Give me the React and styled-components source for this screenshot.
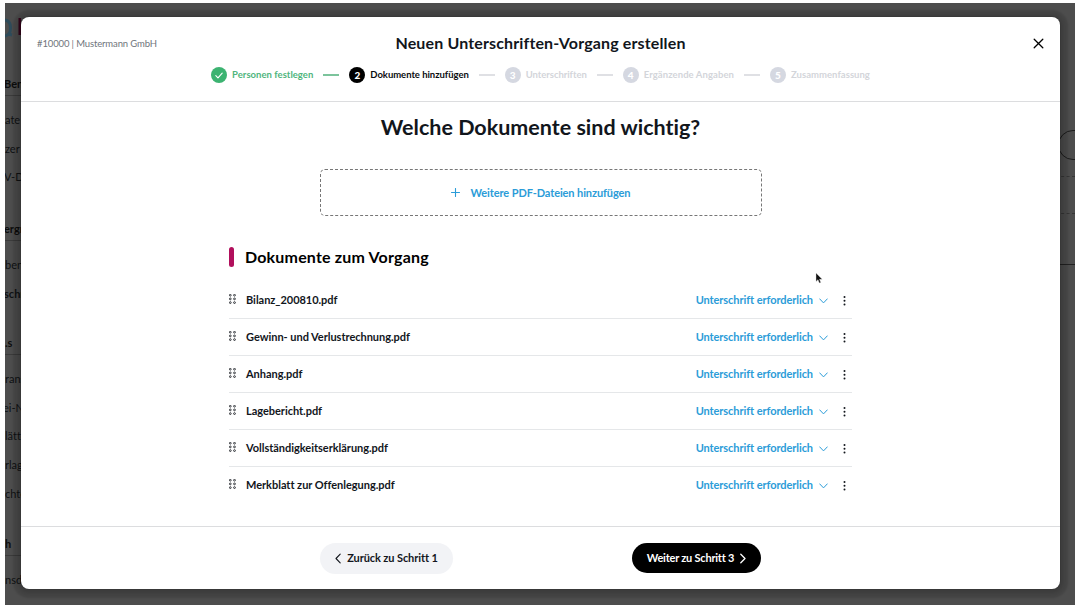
import React, { useState } from "react";

import styled, { createGlobalStyle } from "styled-components";

const GlobalStyle = createGlobalStyle`
  * {
    box-sizing: border-box;
  }

  body {
    margin: 0;
    background: #fff;
    font-family: Lato, "Noto Sans", sans-serif;
    font-variant-ligatures: none;
    color: #12161c;
  }

  button {
    font-family: inherit;
    padding: 0;
    border: 0;
    background: none;
  }
`;

const Screen = styled.div`
  position: relative;
  display: flex;
  justify-content: space-between;
  width: 1070px;
  height: 602px;
  margin: 3px 5px;
  overflow: hidden;
  background: #4d4d4d;
`;

const Sidebar = styled.nav`
  width: 70px;
  height: 100%;
  overflow: hidden;
`;

const LogoRow = styled.div`
  display: flex;
  align-items: flex-start;
  height: 68px;
  padding-top: 13px;
`;

const NavGroup = styled.div`
  height: ${props => props.height}px;
`;

const NavTitle = styled.div`
  height: 25px;
  margin-bottom: 9px;
  padding-top: 6px;
  border-bottom: 1px solid #3b3b3b;
  font-size: 11px;
  font-weight: 700;
  line-height: 14px;
  color: #0c0c0c;
  white-space: nowrap;
  text-indent: ${props => props.$shift || 0}px;
`;

const NavItem = styled.div`
  height: 28.7px;
  font-size: 11px;
  line-height: 30px;
  color: #0f1113;
  font-weight: ${props => (props.$bold ? 700 : 400)};
  white-space: nowrap;
  text-indent: ${props => props.$shift || 0}px;
`;

const PageEdge = styled.div`
  display: flex;
  flex-direction: column;
  width: 30px;
  height: 100%;
  padding-top: 127px;
`;

const RoundButton = styled.div`
  flex: none;
  width: 60px;
  height: 30px;
  border: 1px solid #1c1c1c;
  border-radius: 15px;
  margin-left: 13px;
`;

const EdgeLine = styled.div`
  flex: none;
  height: ${props => props.$space}px;
  border-bottom: 1px ${props => (props.$solid ? "solid #222" : "dashed #363636")};
`;

const Modal = styled.section`
  position: absolute;
  left: 16px;
  top: 14px;
  display: flex;
  flex-direction: column;
  width: 1039px;
  height: 572px;
  border-radius: 8px;
  background: #fff;
  box-shadow: 0 0 0 1px rgba(0, 0, 0, 0.06), 0 1px 3px 3px rgba(0, 0, 0, 0.1),
    0 1px 2px 8px rgba(0, 0, 0, 0.12);
`;

const Header = styled.header`
  height: 85px;
  padding-top: 15px;
  border-bottom: 1px solid #dcdddf;
`;

const TopBar = styled.div`
  display: grid;
  grid-template-columns: 1fr auto 1fr;
  align-items: center;
  height: 22px;
  padding: 0 16px;
`;

const Client = styled.span`
  font-size: 9.5px;
  letter-spacing: -0.13px;
  color: #70757c;
`;

const ModalTitle = styled.h1`
  margin: 0;
  font-size: 16px;
  line-height: 20px;
  letter-spacing: 0.14px;
  font-weight: 700;
`;

const CloseButton = styled.button`
  justify-self: end;
  display: flex;
  padding-top: 1px;
`;

const Stepper = styled.ol`
  display: flex;
  justify-content: center;
  align-items: center;
  height: 16px;
  margin: 13px 0 0;
  padding: 0;
  list-style: none;
`;

const stepColors = {
  done: { circle: "#3cb371", text: "#4fb57d" },
  active: { circle: "#000", text: "#0b0d10" },
  open: { circle: "#d5d8e1", text: "#d3d5da" }
};

const Step = styled.li`
  display: flex;
  align-items: center;
  color: ${props => stepColors[props.$state].text};
`;

const StepCircle = styled.span`
  display: flex;
  align-items: center;
  justify-content: center;
  width: 16px;
  height: 16px;
  margin-right: 5px;
  border-radius: 50%;
  background: ${props => stepColors[props.$state].circle};
  color: #fff;
  font-size: 10px;
  font-weight: 900;
  line-height: 16px;
`;

const StepLabel = styled.span`
  padding-bottom: 1px;
  font-size: 9.5px;
  font-weight: 700;
  line-height: 15px;
  letter-spacing: ${props => props.$spacing}px;
  white-space: nowrap;
`;

const StepLine = styled.span`
  width: 16px;
  height: 2px;
  margin: 0 10px;
  background: ${props => (props.$done ? "#7cc49c" : "#dfe0e4")};
`;

const Content = styled.main`
  flex: 1;
  display: flex;
  flex-direction: column;
  align-items: center;
`;

const Question = styled.h2`
  margin: 11px 0 0;
  font-size: 21.5px;
  line-height: 28px;
  font-weight: 700;
`;

const DropZone = styled.button`
  display: flex;
  align-items: center;
  justify-content: center;
  gap: 11px;
  width: 442px;
  height: 47px;
  margin-top: 28px;
  border: 1px dashed #777;
  border-radius: 5px;
  color: #2b9cd8;
  font-size: 11px;
  font-weight: 700;
  letter-spacing: -0.1px;
`;

const Documents = styled.div`
  width: 623px;
  margin-top: 31px;
`;

const SectionTitle = styled.h3`
  display: flex;
  align-items: center;
  gap: 11px;
  height: 20px;
  margin: 0 0 15px;
  font-size: 16px;
  font-weight: 700;
  line-height: 18px;
  letter-spacing: 0.18px;
  color: #000;

  &:before {
    content: "";
    width: 5px;
    height: 20px;
    border-radius: 2.5px;
    background: #b10f5c;
  }

  span {
    padding-bottom: 1px;
  }
`;

const DocumentRow = styled.div`
  display: flex;
  align-items: center;
  height: 37px;
  border-bottom: 1px solid ${props => (props.$last ? "transparent" : "#e5e7e9")};
`;

const FileName = styled.span`
  flex: 1;
  margin-left: 10px;
  padding-bottom: 1px;
  font-size: 11px;
  font-weight: 700;
  letter-spacing: -0.03px;
`;

const TypeSelect = styled.button`
  display: flex;
  align-items: center;
  gap: 6px;
  margin-right: 14px;
  color: #2b9cd8;
  font-size: 11px;
  font-weight: 700;
  letter-spacing: -0.08px;

  span {
    padding-bottom: 1px;
  }

  svg {
    margin-top: 2px;
  }
`;

const Footer = styled.footer`
  display: flex;
  justify-content: space-between;
  align-items: flex-start;
  height: 63px;
  padding: 16px 299px 0;
  border-top: 1px solid #dcdddf;
`;

const NavButton = styled.button`
  display: flex;
  align-items: center;
  justify-content: center;
  gap: 6px;
  width: ${props => (props.$primary ? 129 : 133)}px;
  height: ${props => (props.$primary ? 30 : 31)}px;
  border-radius: 16px;
  background: ${props => (props.$primary ? "#000" : "#f2f3f6")};
  color: ${props => (props.$primary ? "#fff" : "#12161c")};
  font-size: 11px;
  font-weight: 700;
  letter-spacing: ${props => (props.$primary ? -0.22 : -0.1)}px;

  span {
    padding-bottom: 2px;
  }
`;

const Pointer = styled.svg`
  position: absolute;
  left: 810px;
  top: 269px;
`;

const steps = [
  { label: "Personen festlegen", state: "done", spacing: 0.02 },
  { label: "Dokumente hinzufügen", state: "active", spacing: -0.04 },
  { label: "Unterschriften", state: "open", spacing: -0.05 },
  { label: "Ergänzende Angaben", state: "open", spacing: 0.08 },
  { label: "Zusammenfassung", state: "open", spacing: 0.03 }
];

const files = [
  "Bilanz_200810.pdf",
  "Gewinn- und Verlustrechnung.pdf",
  "Anhang.pdf",
  "Lagebericht.pdf",
  "Vollständigkeitserklärung.pdf",
  "Merkblatt zur Offenlegung.pdf"
];

const navGroups = [
  {
    title: "Ben",
    shift: -1,
    height: 145,
    items: [["ate", 0], ["zer", 0], ["V-D", -1]]
  },
  { title: "ergr", shift: -1, height: 114, items: [["ben", 0], ["schn", -1, true]] },
  {
    title: ".s",
    shift: 0,
    height: 201,
    items: [["rans", 0], ["ei-N", -2], ["lätte", 0], ["rlag", 0], ["chte", 0]]
  },
  { title: "h", shift: 0, height: 70, items: [["nsd", 0]] }
];

const Stroke = ({ width, height, d, weight = 1.1 }) => (
  <svg
    width={width}
    height={height}
    viewBox={`0 0 ${width} ${height}`}
    fill="none"
    stroke="currentColor"
    strokeWidth={weight}
    strokeLinecap="round"
    strokeLinejoin="round"
  >
    <path d={d} />
  </svg>
);

const DragHandle = () => (
  <svg width="7" height="12" viewBox="0 0 7 12" fill="none" stroke="#22262b" strokeWidth="0.9">
    {[1.2, 4.9, 8.6].map(y => (
      <React.Fragment key={y}>
        <circle cx="1.3" cy={y} r="0.9" />
        <circle cx="5.5" cy={y} r="0.9" />
      </React.Fragment>
    ))}
  </svg>
);

const MoreDots = () => (
  <svg width="4" height="11" viewBox="0 0 4 11" fill="#12161c">
    <circle cx="2.5" cy="2" r="1" />
    <circle cx="2.5" cy="5.7" r="1" />
    <circle cx="2.5" cy="9.4" r="1" />
  </svg>
);

const BackgroundPage = () => (
  <>
    <Sidebar>
      <LogoRow>
        <svg width="16" height="26" viewBox="0 0 16 26" fill="none">
          <path d="M-1 4C4 4 5.5 8 5.5 12C5.5 17 3 20-1 20M3 18L7 19" stroke="#2e4b5a" strokeWidth="3" />
          <path d="M15 2V19" stroke="#37051d" strokeWidth="3" />
        </svg>
      </LogoRow>
      {navGroups.map(group => (
        <NavGroup key={group.title} height={group.height}>
          <NavTitle $shift={group.shift}>{group.title}</NavTitle>
          {group.items.map(([label, shift, bold]) => (
            <NavItem key={label} $shift={shift} $bold={bold}>
              {label}
            </NavItem>
          ))}
        </NavGroup>
      ))}
    </Sidebar>
    <PageEdge>
      <RoundButton />
      <EdgeLine $space={17} />
      <EdgeLine $space={37} />
      <EdgeLine $space={51} $solid />
    </PageEdge>
  </>
);

const App = () => {
  const [documents] = useState(files);

  return (
    <>
      <GlobalStyle />
      <Screen>
        <BackgroundPage />
        <Modal>
          <Header>
            <TopBar>
              <Client>#10000 | Mustermann GmbH</Client>
              <ModalTitle>Neuen Unterschriften-Vorgang erstellen</ModalTitle>
              <CloseButton aria-label="Schließen">
                <Stroke width={11} height={11} d="M1.2 1.2L9.8 9.8M9.8 1.2L1.2 9.8" weight={1.3} />
              </CloseButton>
            </TopBar>
            <Stepper>
              {steps.map((step, i) => (
                <Step key={step.label} $state={step.state}>
                  <StepCircle $state={step.state}>
                    {step.state === "done" ? (
                      <Stroke width={8} height={7} d="M0.8 3.6L3 5.8L7.2 1.2" />
                    ) : (
                      i + 1
                    )}
                  </StepCircle>
                  <StepLabel $spacing={step.spacing}>{step.label}</StepLabel>
                  {i < steps.length - 1 && <StepLine $done={step.state === "done"} />}
                </Step>
              ))}
            </Stepper>
          </Header>
          <Content>
            <Question>Welche Dokumente sind wichtig?</Question>
            <DropZone>
              <Stroke width={9} height={9} d="M4.5 0.5V8.5M0.5 4.5H8.5" />
              Weitere PDF-Dateien hinzufügen
            </DropZone>
            <Documents>
              <SectionTitle>
                <span>Dokumente zum Vorgang</span>
              </SectionTitle>
              {documents.map((name, i) => (
                <DocumentRow key={name} $last={i === documents.length - 1}>
                  <DragHandle />
                  <FileName>{name}</FileName>
                  <TypeSelect>
                    <span>Unterschrift erforderlich</span>
                    <Stroke width={9} height={6} d="M0.7 0.9L4.5 4.9L8.3 0.9" weight={1} />
                  </TypeSelect>
                  <MoreDots />
                  <span style={{ width: 6 }} />
                </DocumentRow>
              ))}
            </Documents>
          </Content>
          <Footer>
            <NavButton>
              <Stroke width={6} height={11} d="M5.2 1.2L1 5.5L5.2 9.8" />
              <span>Zurück zu Schritt 1</span>
            </NavButton>
            <NavButton $primary>
              <span>Weiter zu Schritt 3</span>
              <Stroke width={6} height={11} d="M0.8 1.2L5 5.5L0.8 9.8" weight={1.3} />
            </NavButton>
          </Footer>
        </Modal>
        <Pointer width="8" height="12" viewBox="0 0 8 12">
          <path d="M1 1V9.5L3 7.7L4.3 11L5.8 10.4L4.5 7.3H7.2Z" fill="#111" stroke="#ddd" strokeWidth="0.4" />
        </Pointer>
      </Screen>
    </>
  );
};

export default App;
